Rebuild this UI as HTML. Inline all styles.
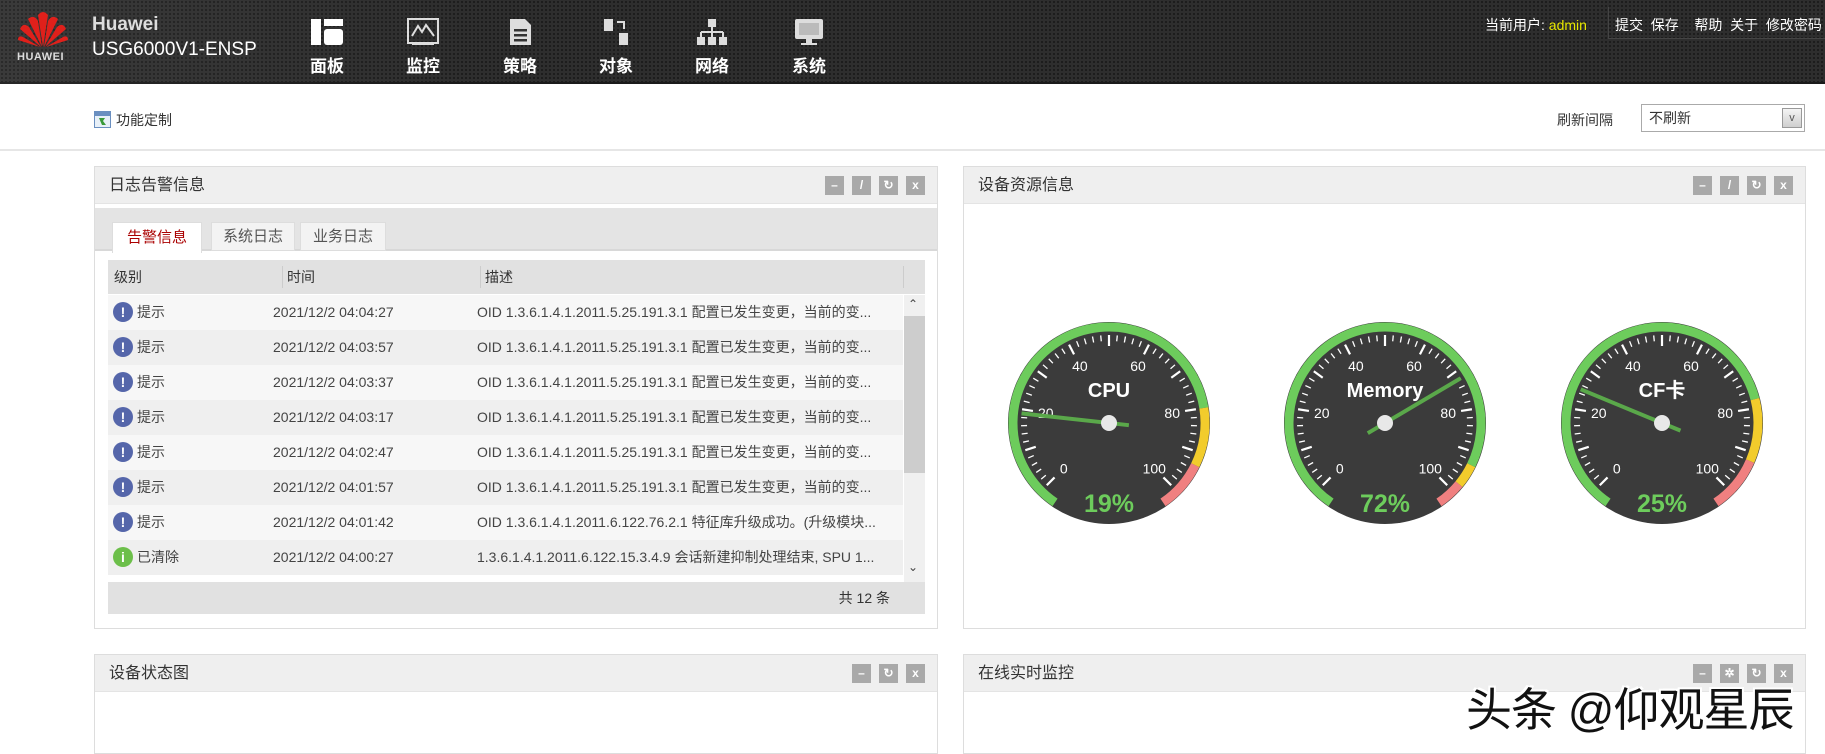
<!DOCTYPE html>
<html><head><meta charset="utf-8">
<style>
*{margin:0;padding:0;box-sizing:border-box}
body{width:1825px;height:747px;overflow:hidden;background:#fff;font-family:"Liberation Sans","Noto Sans CJK SC",sans-serif;color:#333;position:relative}
.hdr{position:absolute;left:0;top:0;width:1825px;height:84px;background:#2e2e2e;background-image:radial-gradient(#1c1c1c 1px,transparent 1.3px);background-size:4px 4px;border-bottom:2px solid #1a1a1a}
.hdr .glow{position:absolute;left:0;top:0;width:480px;height:84px;background:linear-gradient(90deg,rgba(255,255,255,.06),rgba(255,255,255,0))}
.abs{position:absolute}
.nav{position:absolute;top:18px;width:60px;text-align:center;color:#fff;font-weight:bold;font-size:17px}
.nav svg{display:block;margin:0 auto 6px}
.panel{position:absolute;border:1px solid #ddd;background:#fff}
.ptitle{height:37px;background:#efefef;border-bottom:1px solid #e4e4e4;font-size:16px;line-height:37px;padding-left:14px;color:#333}
.btns{position:absolute;top:9px;right:12px;line-height:19px;height:19px;font-size:0}
.btns span{display:inline-block;vertical-align:top;width:19px;height:19px;background:#a9a9a9;margin-left:8px;color:#fff;font-size:12px;text-align:center;line-height:19px;font-weight:bold}
.row{position:absolute;left:0;width:795px;height:35px;font-size:14px;line-height:35px;color:#444}
.row span{position:absolute}
.ic{display:inline-block;width:20px;height:20px;border-radius:50%;color:#fff;text-align:center;font-weight:bold;font-size:14px;line-height:20px;top:7px}
</style></head><body>
<div class="hdr"><div class="glow"></div></div>
<svg class="abs" style="left:16px;top:9px" width="54" height="40" viewBox="0 0 54 40">
<g fill="#e0201b">
<path d="M27 38 L22 6 Q27 0 32 6 Z"/>
<path d="M26 38 L12 10 Q18 5 22 12 Z" />
<path d="M28 38 L42 10 Q36 5 32 12 Z"/>
<path d="M25 38 L4 20 Q7 13 13 18 Z"/>
<path d="M29 38 L50 20 Q47 13 41 18 Z"/>
<path d="M24 38 L2 31 Q2 26 7 28 Z"/>
<path d="M30 38 L52 31 Q52 26 47 28 Z"/>
</g></svg>
<div class="abs" style="left:17px;top:51px;color:#ddd;font-size:11px;font-weight:bold;letter-spacing:.5px">HUAWEI</div>
<div class="abs" style="left:92px;top:14px;color:#ddd;font-size:19px;font-weight:bold">Huawei</div>
<div class="abs" style="left:92px;top:39px;color:#fff;font-size:19px">USG6000V1-ENSP</div>

<div class="nav" style="left:297px"><svg width="34" height="28"><rect x="1" y="1" width="10" height="26" fill="#fff"/><rect x="14" y="1" width="19" height="7" fill="#fff"/><rect x="14" y="11" width="19" height="16" rx="3" fill="#fff"/></svg>面板</div>
<div class="nav" style="left:393px"><svg width="34" height="28"><rect x="2" y="1" width="30" height="24" fill="none" stroke="#ddd" stroke-width="2"/><path d="M6 18 L12 8 L16 14 L20 7 L28 18" fill="none" stroke="#ddd" stroke-width="2"/><rect x="6" y="24" width="22" height="3" fill="#ddd"/></svg>监控</div>
<div class="nav" style="left:490px"><svg width="34" height="28"><path d="M7 1 H22 L28 7 V27 H7 Z" fill="#ddd"/><rect x="11" y="11" width="13" height="2.5" fill="#333"/><rect x="11" y="16" width="13" height="2.5" fill="#333"/><rect x="11" y="21" width="13" height="2.5" fill="#333"/></svg>策略</div>
<div class="nav" style="left:586px"><svg width="34" height="28"><rect x="5" y="1" width="9" height="12" fill="#ddd"/><rect x="20" y="15" width="9" height="12" fill="#ddd"/><path d="M18 4 H25 V11" fill="none" stroke="#ddd" stroke-width="2"/></svg>对象</div>
<div class="nav" style="left:682px"><svg width="34" height="28"><rect x="13" y="1" width="8" height="8" fill="#ddd"/><path d="M17 9 V14 M6 14 H28 M6 14 V19 M17 14 V19 M28 14 V19" stroke="#ddd" stroke-width="2" fill="none"/><rect x="2" y="19" width="8" height="8" fill="#ddd"/><rect x="13" y="19" width="8" height="8" fill="#ddd"/><rect x="24" y="19" width="8" height="8" fill="#ddd"/></svg>网络</div>
<div class="nav" style="left:779px"><svg width="34" height="28"><rect x="3" y="1" width="28" height="20" rx="2" fill="#ddd"/><rect x="7" y="5" width="20" height="12" fill="#bbb"/><rect x="14" y="21" width="6" height="4" fill="#ddd"/><rect x="9" y="25" width="16" height="2" fill="#ddd"/></svg>系统</div>

<div class="abs" style="left:1485px;top:15px;color:#fff;font-size:14px">当前用户: <span style="color:#e8e800">admin</span></div>
<div class="abs" style="left:1608px;top:7px;width:220px;height:32px;border-left:1px solid #444;border-bottom:1px solid #444"></div>
<div class="abs" style="left:1615px;top:15px;color:#fff;font-size:14px;white-space:nowrap">提交&nbsp; 保存 &nbsp;&nbsp; 帮助&nbsp; 关于&nbsp; 修改密码</div>

<svg class="abs" style="left:94px;top:111px" width="17" height="17"><rect x="0.5" y="0.5" width="16" height="16" fill="#e8f0f8" stroke="#6a8fc0"/><rect x="1" y="1" width="15" height="4" fill="#6a8fc0"/><path d="M5 7 h6 l-2 3 3 4 h-4 z" fill="#3a9a3a"/></svg>
<div class="abs" style="left:116px;top:110px;font-size:14px;color:#333">功能定制</div>
<div class="abs" style="left:1557px;top:110px;font-size:14px;color:#333">刷新间隔</div>
<div class="abs" style="left:1641px;top:104px;width:164px;height:28px;border:1px solid #aaa;background:#fff;font-size:14px;line-height:26px;padding-left:7px">不刷新
<div style="position:absolute;right:2px;top:3px;width:20px;height:20px;border:1px solid #999;background:linear-gradient(#f4f4f4,#cfcfcf);color:#555;font-size:11px;line-height:19px;text-align:center">v</div></div>
<div class="abs" style="left:0;top:149px;width:1825px;height:2px;background:#e6e6e6"></div>

<div class="panel" style="left:94px;top:166px;width:844px;height:463px">
<div class="ptitle">日志告警信息<div class="btns"><span>–</span><span>/</span><span>↻</span><span>x</span></div></div>
<div class="abs" style="left:0;top:41px;width:842px;height:43px;background:#e4e4e4;border-bottom:2px solid #d8d8d8"></div>
<div class="abs" style="left:17px;top:55px;width:90px;height:31px;background:#fff;border:1px solid #ddd;border-bottom:none;color:#a00;font-size:15px;text-align:center;line-height:30px">告警信息</div>
<div class="abs" style="left:116px;top:55px;width:84px;height:29px;background:#f3f3f3;border:1px solid #ddd;color:#555;font-size:15px;text-align:center;line-height:28px">系统日志</div>
<div class="abs" style="left:205px;top:55px;width:86px;height:29px;background:#f3f3f3;border:1px solid #ddd;color:#555;font-size:15px;text-align:center;line-height:28px">业务日志</div>
<div class="abs" style="left:13px;top:93px;width:817px;height:354px;overflow:hidden;background:#fff">
 <div class="abs" style="left:0;top:0;width:817px;height:34px;background:#e1e1e1;font-size:14px;line-height:34px;color:#333">
  <span class="abs" style="left:6px">级别</span><span class="abs" style="left:174px;top:6px;width:1px;height:22px;background:#ccc"></span><span class="abs" style="left:179px">时间</span>
  <span class="abs" style="left:372px;top:6px;width:1px;height:22px;background:#ccc"></span><span class="abs" style="left:377px">描述</span><span class="abs" style="left:795px;top:6px;width:1px;height:22px;background:#ccc"></span></div>
 <div id="rows"></div>
 <div class="abs" style="left:796px;top:35px;width:21px;height:287px;background:#f0f0f0"></div>
 <div class="abs" style="left:796px;top:56px;width:21px;height:157px;background:#cdcdcd"></div>
 <div class="abs" style="left:800px;top:37px;font-size:12px;color:#444">&#8963;</div>
 <div class="abs" style="left:800px;top:300px;font-size:12px;color:#444">&#8964;</div>
 <div class="abs" style="left:0;top:322px;width:817px;height:32px;background:#e1e1e1;font-size:14px;line-height:32px;text-align:right;padding-right:35px">共 12 条</div>
</div>
</div>

<div class="panel" style="left:963px;top:166px;width:843px;height:463px">
<div class="ptitle">设备资源信息<div class="btns"><span>–</span><span>/</span><span>↻</span><span>x</span></div></div>
<svg id="g" class="abs" style="left:0;top:0" width="843" height="463"></svg>
</div>

<div class="panel" style="left:94px;top:654px;width:844px;height:100px">
<div class="ptitle">设备状态图<div class="btns"><span>–</span><span>↻</span><span>x</span></div></div></div>
<div class="panel" style="left:963px;top:654px;width:843px;height:100px">
<div class="ptitle">在线实时监控<div class="btns"><span>–</span><span>✲</span><span>↻</span><span>x</span></div></div></div>
<div class="abs" style="left:1466px;top:674px;font-size:46px;color:#111;text-shadow:2px 2px 0 #fff,-2px -2px 0 #fff,2px -2px 0 #fff,-2px 2px 0 #fff;white-space:nowrap;letter-spacing:-1px">头条 @仰观星辰</div>

<script>
var R=[["提示","2021/12/2 04:04:27","OID 1.3.6.1.4.1.2011.5.25.191.3.1 配置已发生变更，当前的变..."],
["提示","2021/12/2 04:03:57","OID 1.3.6.1.4.1.2011.5.25.191.3.1 配置已发生变更，当前的变..."],
["提示","2021/12/2 04:03:37","OID 1.3.6.1.4.1.2011.5.25.191.3.1 配置已发生变更，当前的变..."],
["提示","2021/12/2 04:03:17","OID 1.3.6.1.4.1.2011.5.25.191.3.1 配置已发生变更，当前的变..."],
["提示","2021/12/2 04:02:47","OID 1.3.6.1.4.1.2011.5.25.191.3.1 配置已发生变更，当前的变..."],
["提示","2021/12/2 04:01:57","OID 1.3.6.1.4.1.2011.5.25.191.3.1 配置已发生变更，当前的变..."],
["提示","2021/12/2 04:01:42","OID 1.3.6.1.4.1.2011.6.122.76.2.1 特征库升级成功。(升级模块..."],
["已清除","2021/12/2 04:00:27","1.3.6.1.4.1.2011.6.122.15.3.4.9 会话新建抑制处理结束, SPU 1..."]];
var h="";R.forEach(function(r,i){var g=r[0]=="已清除";
h+='<div class="row" style="top:'+(35+i*35)+'px;background:'+(i%2?'#efefef':'#f7f7f7')+'"><span class="ic" style="left:5px;background:'+(g?'#6cbf4a':'#5566aa')+'">'+(g?'i':'!')+'</span><span style="left:29px">'+r[0]+'</span><span style="left:165px">'+r[1]+'</span><span style="left:369px;white-space:nowrap">'+r[2]+'</span></div>';});
document.getElementById("rows").innerHTML=h;
var s="",gs=[[145,"CPU",19,80,93],[421,"Memory",72,93,98],[698,"CF卡",25,78,92]];
function pt(cx,cy,r,v){var a=(-135+v*2.7)*Math.PI/180;return [cx+r*Math.sin(a),cy-r*Math.cos(a)];}
function arc(cx,cy,r,v1,v2,c){var p=pt(cx,cy,r,v1),q=pt(cx,cy,r,v2);return '<path d="M'+p[0]+' '+p[1]+' A'+r+' '+r+' 0 '+((v2-v1)*2.7>180?1:0)+' 1 '+q[0]+' '+q[1]+'" fill="none" stroke="'+c+'" stroke-width="9"/>';}
gs.forEach(function(g){var cx=g[0],cy=256;
s+='<circle cx="'+cx+'" cy="'+cy+'" r="101" fill="#3b3b3b"/>';
s+=arc(cx,cy,96,-4,g[3],"#6dcc5c")+arc(cx,cy,96,g[3],g[4],"#f2cc2c")+arc(cx,cy,96,g[4],104,"#f08080");
for(var v=0;v<=100;v+=2){var big=v%10==0;var a=pt(cx,cy,88,v),b=pt(cx,cy,big?77:82,v);s+='<line x1="'+a[0]+'" y1="'+a[1]+'" x2="'+b[0]+'" y2="'+b[1]+'" stroke="#fff" stroke-width="'+(big?2.2:1.3)+'"/>';}
for(var v=0;v<=100;v+=20){var p=pt(cx,cy,64,v);s+='<text x="'+p[0]+'" y="'+(p[1]+5)+'" fill="#fff" font-size="14" text-anchor="middle" font-family="Liberation Sans">'+v+'</text>';}
s+='<text x="'+cx+'" y="'+(cy-26)+'" fill="#fff" font-size="20" font-weight="bold" text-anchor="middle" font-family="Liberation Sans,Noto Sans CJK SC,sans-serif">'+g[1]+'</text>';
s+='<text x="'+cx+'" y="'+(cy+89)+'" fill="#6dcc5c" font-size="25" font-weight="bold" text-anchor="middle" font-family="Liberation Sans">'+g[2]+'%</text>';
var t=pt(cx,cy,88,g[2]),e=pt(cx,cy,-20,g[2]);
s+='<line x1="'+e[0]+'" y1="'+e[1]+'" x2="'+t[0]+'" y2="'+t[1]+'" stroke="#5aa84a" stroke-width="4"/>';
s+='<circle cx="'+cx+'" cy="'+cy+'" r="8" fill="#e8e8e8"/>';});
document.getElementById("g").innerHTML=s;
</script>
</body></html>
